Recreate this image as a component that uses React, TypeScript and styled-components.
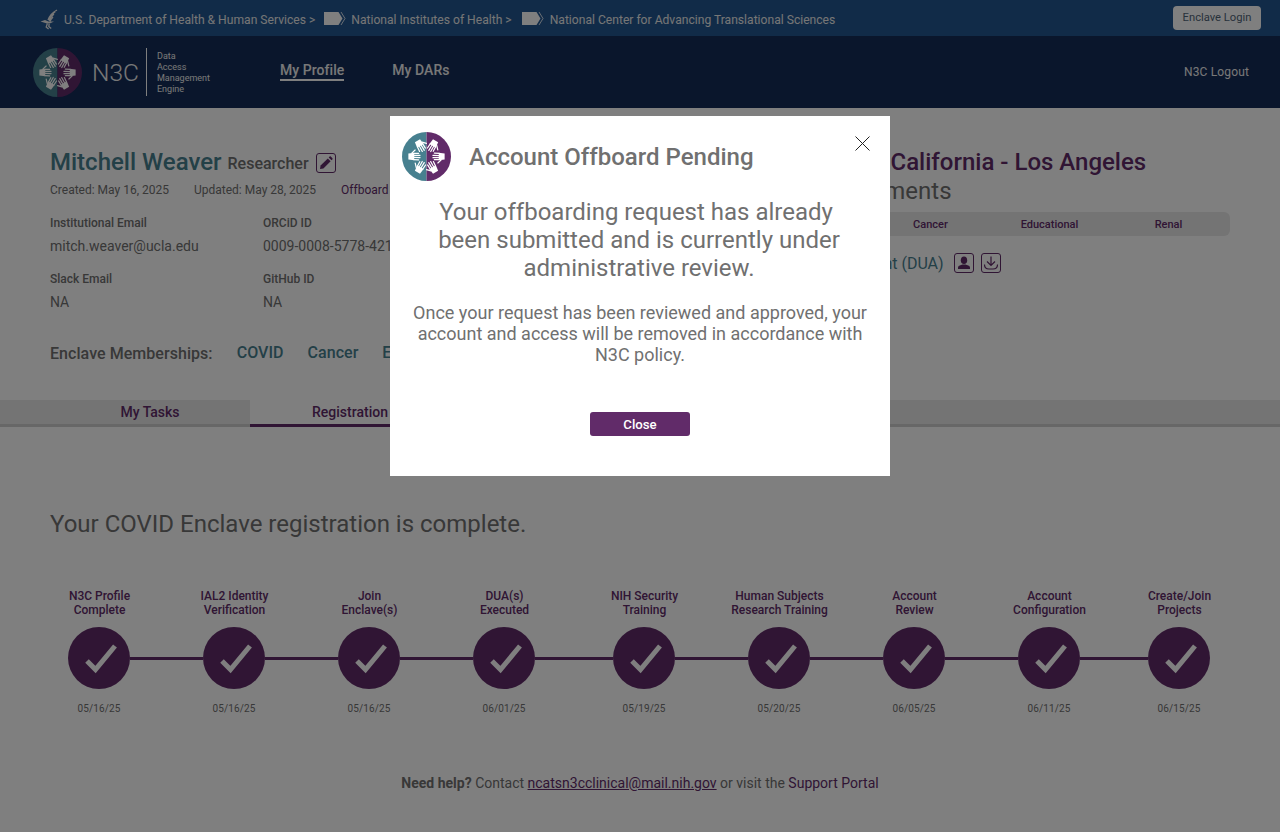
import React from "react";
import styled, { createGlobalStyle } from "styled-components";

const Global = createGlobalStyle`
  html, body { margin: 0; padding: 0; background: #fff; }
  body { font-family: Roboto, "Liberation Sans", sans-serif; color: #707070; overflow: hidden; }
  * { box-sizing: border-box; }
`;

const TEAL = "#47808f";
const PURPLE = "#612b69";

const Page = styled.div`
  position: relative;
  width: 1280px;
  height: 832px;
  overflow: hidden;
`;

const TopBar = styled.div`
  height: 36px;
  background: #225690;
  display: flex;
  align-items: center;
  padding: 4px 19px 0 40px;
  color: #ececec;
  font-size: 12.12px;
`;
const Crumb = styled.span<{ $ml?: number; $mr?: number }>`
  display: inline-flex;
  align-items: center;
  white-space: nowrap;
  margin-left: ${(p) => p.$ml ?? 0}px;
  margin-right: ${(p) => p.$mr ?? 0}px;
`;
const Spacer = styled.div`
  flex: 1;
`;
const EnclaveBtn = styled.button`
  width: 88px;
  height: 24px;
  border: 0;
  border-radius: 4px;
  background: #fff;
  color: #4f6478;
  font: 400 11.2px Roboto, sans-serif;
  padding: 0;
  margin-top: -5px;
`;

const Nav = styled.nav`
  height: 72px;
  background: #142c58;
  display: flex;
  align-items: center;
  padding: 0 31px 0 33px;
  color: #f0f0f0;
`;
const LogoText = styled.div`
  font-size: 24.5px;
  font-weight: 300;
  margin-left: 10px;
  width: 54px;
`;
const LogoRule = styled.div`
  width: 1px;
  height: 48px;
  background: #fff;
`;
const LogoLines = styled.div`
  font-size: 9px;
  line-height: 11px;
  margin: 1px 0 0 10px;
  width: 123px;
`;
const NavLink = styled.a<{ $active?: boolean }>`
  font-size: 14px;
  font-weight: 500;
  letter-spacing: 0.05px;
  margin-right: 48px;
  line-height: 17px;
  margin-top: -2px;
  border-bottom: 2px solid ${(p) => (p.$active ? "#fff" : "transparent")};
`;
const Logout = styled.a`
  font-size: 12px;
  letter-spacing: 0.15px;
`;

const Profile = styled.section`
  display: grid;
  grid-template-columns: 673px 1fr;
  padding: 39px 50px 0;
  height: 292px;
`;
const NameRow = styled.div`
  display: flex;
  align-items: center;
  height: 30px;
`;
const Name = styled.h1`
  margin: 0;
  font-size: 24px;
  font-weight: 500;
  color: ${TEAL};
`;
const Role = styled.span`
  font-size: 16px;
  font-weight: 500;
  margin-left: 6px;
  margin-top: 3px;
`;
const IconBox = styled.span`
  display: inline-flex;
  align-items: center;
  justify-content: center;
  width: 20px;
  height: 20px;
  border: 1px solid ${PURPLE};
  border-radius: 3px;
  color: ${PURPLE};
`;
const EditBox = styled(IconBox)`
  margin-left: 7px;
  margin-top: 1px;
`;
const MetaRow = styled.div`
  display: flex;
  font-size: 12px;
  margin-top: 6px;
  height: 14px;
  line-height: 14px;
  gap: 25px;
`;
const OffboardLink = styled.a`
  color: ${PURPLE};
`;
const Fields = styled.div`
  display: grid;
  grid-template-columns: 213px 213px;
  margin-top: 19px;
  row-gap: 18px;
`;
const Field = styled.div`
  height: 38px;
`;
const FieldLabel = styled.div`
  font-size: 12px;
  font-weight: 500;
  line-height: 14px;
`;
const FieldValue = styled.div`
  font-size: 14px;
  line-height: 16px;
  margin-top: 8px;
`;
const Memberships = styled.div`
  display: flex;
  align-items: baseline;
  margin-top: 34px;
  font-size: 16px;
  font-weight: 500;
  letter-spacing: 0.05px;
  white-space: nowrap;
`;
const MemberLink = styled.a`
  color: ${TEAL};
  margin-left: 24px;
  position: relative;
  top: -1px;
`;

const RightCol = styled.div`
  min-width: 0;
`;
const Institution = styled.h2`
  margin: 0 0 0 27px;
  font-size: 24px;
  font-weight: 500;
  color: ${PURPLE};
  white-space: nowrap;
  height: 30px;
  line-height: 30px;
`;
const Assign = styled.h3`
  margin: 0;
  font-size: 24px;
  font-weight: 400;
  line-height: 28px;
`;
const Pill = styled.div`
  display: grid;
  grid-template-columns: repeat(4, 119px);
  justify-content: end;
  height: 24px;
  margin-top: 7px;
  border-radius: 6px;
  background: #e8e8e8;
  align-items: center;
  padding-right: 2px;
  font-size: 11px;
  font-weight: 500;
  color: ${PURPLE};
  text-align: center;
`;
const DuaRow = styled.div`
  display: flex;
  align-items: center;
  margin-top: 17px;
  padding-left: 28px;
  font-size: 16px;
  color: ${TEAL};
  height: 20px;
  gap: 7px;
`;
const DuaText = styled.span`
  margin-right: 3px;
  white-space: nowrap;
`;

const Tabs = styled.div`
  display: flex;
  height: 27px;
  background: #e9e9e9;
  border-bottom: 3px solid #cfcfcf;
`;
const Tab = styled.div<{ $active?: boolean }>`
  width: 200px;
  height: 27px;
  text-align: center;
  line-height: 25px;
  font-size: 14px;
  font-weight: 500;
  color: ${PURPLE};
  background: ${(p) => (p.$active ? "#fff" : "transparent")};
  border-bottom: 3px solid ${(p) => (p.$active ? PURPLE : "transparent")};
`;
const TabsInset = styled.div`
  width: 50px;
`;

const Status = styled.h2`
  margin: 83px 0 0 50px;
  font-size: 24px;
  line-height: 28px;
  font-weight: 400;
`;

const Steps = styled.div`
  display: flex;
  margin: 51px 0 0 34px;
`;
const Step = styled.div<{ $ml: number; $line: number }>`
  position: relative;
  width: 130px;
  flex: none;
  margin-left: ${(p) => p.$ml}px;
  display: flex;
  flex-direction: column;
  align-items: center;
  &::after {
    content: "";
    display: ${(p) => (p.$line ? "block" : "none")};
    position: absolute;
    top: 68px;
    left: 96px;
    width: ${(p) => p.$line}px;
    height: 3px;
    background: ${PURPLE};
  }
`;
const StepLabel = styled.div`
  height: 28px;
  font-size: 12px;
  line-height: 14px;
  font-weight: 500;
  color: ${PURPLE};
  text-align: center;
  white-space: pre-line;
  padding-left: 1px;
`;
const Circle = styled.div`
  width: 62px;
  height: 62px;
  margin-top: 10px;
  border-radius: 50%;
  background: ${PURPLE};
  display: flex;
  align-items: center;
  justify-content: center;
`;
const StepDate = styled.div`
  font-size: 10px;
  line-height: 12px;
  margin-top: 14px;
  letter-spacing: 0.1px;
`;

const Help = styled.footer`
  margin-top: 60px;
  text-align: center;
  font-size: 14px;
  line-height: 16px;
`;
const HelpStrong = styled.b`
  font-weight: 700;
`;
const HelpLink = styled.a`
  color: ${PURPLE};
  text-decoration: ${(p: { $u?: boolean }) => (p.$u ? "underline" : "none")};
`;

const Overlay = styled.div`
  position: absolute;
  inset: 0;
  background: rgba(0, 0, 0, 0.5);
`;
const Modal = styled.div`
  position: absolute;
  top: 116px;
  left: 390px;
  width: 500px;
  height: 360px;
  background: #fff;
  padding: 16px 12px 0;
  color: #707070;
  display: flex;
  flex-direction: column;
  align-items: center;
`;
const ModalHead = styled.div`
  display: flex;
  align-items: center;
  align-self: stretch;
  gap: 18px;
  height: 49px;
`;
const ModalTitle = styled.h2`
  margin: 0;
  font-size: 24px;
  font-weight: 500;
`;
const CloseX = styled.button`
  position: absolute;
  top: 19px;
  right: 19px;
  width: 17px;
  height: 17px;
  padding: 0;
  border: 0;
  background: none;
  display: flex;
`;
const Lead = styled.p`
  margin: 17px 2px 0 0;
  width: 420px;
  font-size: 24px;
  line-height: 28px;
  text-align: center;
`;
const Sub = styled.p`
  margin: 20px 0 0;
  font-size: 18px;
  line-height: 21px;
  text-align: center;
`;
const CloseBtn = styled.button`
  margin-top: 47px;
  width: 100px;
  height: 24px;
  border: 0;
  border-radius: 3px;
  background: ${PURPLE};
  color: #fff;
  font: 500 13.2px Roboto, sans-serif;
  padding: 0;
`;

const Hand = () => (
  <g>
    <path d="M-3 -18.5 L3 -18.5 L3.8 -12.5 L-3.8 -12.5 Z" fill="#fff" />
    <g stroke="#fff" strokeWidth="1.25" strokeLinecap="round" fill="none">
      <path d="M-3.1 -13 L-3.5 -8" />
      <path d="M-1 -13 L-1.1 -6.6" />
      <path d="M1.1 -13 L1.2 -6.6" />
      <path d="M3.1 -13 L3.3 -8" />
      <path d="M3.4 -15 L6.6 -11.6" />
    </g>
  </g>
);

const Logo = ({ size }: { size: number }) => (
  <svg width={size} height={size} viewBox="-25 -25 50 50" style={{ flex: "none" }}>
    <path d="M0 -25 A25 25 0 0 0 0 25 Z" fill={TEAL} />
    <path d="M0 -25 A25 25 0 0 1 0 25 Z" fill={PURPLE} />
    {[-30, 30, 90, 150, 210, 270].map((a) => (
      <g key={a} transform={`rotate(${a})`}>
        <Hand />
      </g>
    ))}
  </svg>
);

const Eagle = () => (
  <svg width="18" height="21" viewBox="0 0 18 21" fill="none" stroke="#ececec" strokeWidth="1.3" style={{ marginRight: 6, marginTop: -2 }}>
    <path d="M17 1 C13 3 9.5 7 8 11 M15.4 2.4 C12 5 9.5 8 8.8 11.5 M14 5 C11.5 7 10 9.5 9.6 12 M13 8 C11 10 10.4 11 10.2 12.6" />
    <path d="M0.5 12.6 L5 11 L8.5 12.5 L14 12.6 L10.4 14.2 L7 14.6 Z" fill="#ececec" stroke="none" />
    <path d="M7.4 14.5 L6.2 18 L8.6 20 M9.2 14.6 L8.8 17.4 L11.2 19.6" />
  </svg>
);

const Tag = () => (
  <svg width="22" height="13" viewBox="0 0 22 13" style={{ margin: "-3px 5px 0 9px", flex: "none" }}>
    <path d="M0 0 H14.5 L18.5 6.5 L14.5 13 H0 Z" fill="#fff" />
    <path d="M17 0 L21 6.5 L17 13" fill="none" stroke="#fff" strokeWidth="0.8" />
  </svg>
);

const Check = () => (
  <svg width="36" height="34" viewBox="0 0 36 34" fill="none">
    <path d="M6 20 L14.5 28.5 L34 5" stroke="#fff" strokeWidth="5" />
  </svg>
);

const Pencil = () => (
  <svg width="14" height="14" viewBox="0 0 14 14" fill="currentColor">
    <path d="M1 13 L1.6 9.6 L8.8 2.4 L11.6 5.2 L4.4 12.4 Z" />
    <path d="M9.7 1.5 L10.6 .6 Q11.2 .1 11.8 .6 L13.4 2.2 Q13.9 2.8 13.4 3.4 L12.5 4.3 Z" />
  </svg>
);

const Person = () => (
  <svg width="14" height="14" viewBox="0 0 14 14" fill="currentColor">
    <ellipse cx="7" cy="4.2" rx="3.2" ry="3.8" />
    <path d="M1 13 V11.4 Q1 9.8 3.4 9.2 L5.4 8.6 H8.6 L10.6 9.2 Q13 9.8 13 11.4 V13 Z" />
  </svg>
);

const Download = () => (
  <svg width="16" height="16" viewBox="0 0 16 16" fill="none" stroke="currentColor" strokeWidth="1.2">
    <path d="M8 1.5 V10 M4 6.5 L8 10.5 L12 6.5" />
    <path d="M1.5 9.5 Q1.5 14 6 14 H10 Q14.5 14 14.5 9.5" />
  </svg>
);

const steps = [
  { label: "N3C Profile\nComplete", date: "05/16/25", ml: 0, line: 73 },
  { label: "IAL2 Identity\nVerification", date: "05/16/25", ml: 5, line: 73 },
  { label: "Join\nEnclave(s)", date: "05/16/25", ml: 5, line: 73 },
  { label: "DUA(s)\nExecuted", date: "06/01/25", ml: 5, line: 78 },
  { label: "NIH Security\nTraining", date: "05/19/25", ml: 10, line: 73 },
  { label: "Human Subjects\nResearch Training", date: "05/20/25", ml: 5, line: 73 },
  { label: "Account\nReview", date: "06/05/25", ml: 5, line: 73 },
  { label: "Account\nConfiguration", date: "06/11/25", ml: 5, line: 68 },
  { label: "Create/Join\nProjects", date: "06/15/25", ml: 0, line: 0 },
];

export default function App() {
  return (
    <Page>
      <Global />
      <TopBar>
        <Eagle />
        <Crumb>U.S. Department of Health &amp; Human Services &gt;</Crumb>
        <Tag />
        <Crumb $mr={1}>National Institutes of Health &gt;</Crumb>
        <Tag />
        <Crumb $ml={1}>National Center for Advancing Translational Sciences</Crumb>
        <Spacer />
        <EnclaveBtn>Enclave Login</EnclaveBtn>
      </TopBar>
      <Nav>
        <Logo size={49} />
        <LogoText>N3C</LogoText>
        <LogoRule />
        <LogoLines>
          Data
          <br />
          Access
          <br />
          Management
          <br />
          Engine
        </LogoLines>
        <NavLink $active>My Profile</NavLink>
        <NavLink>My DARs</NavLink>
        <Spacer />
        <Logout>N3C Logout</Logout>
      </Nav>

      <Profile>
        <div>
          <NameRow>
            <Name>Mitchell Weaver</Name>
            <Role>Researcher</Role>
            <EditBox>
              <Pencil />
            </EditBox>
          </NameRow>
          <MetaRow>
            <span>Created: May 16, 2025</span>
            <span>Updated: May 28, 2025</span>
            <OffboardLink>Offboard</OffboardLink>
          </MetaRow>
          <Fields>
            <Field>
              <FieldLabel>Institutional Email</FieldLabel>
              <FieldValue>mitch.weaver@ucla.edu</FieldValue>
            </Field>
            <Field>
              <FieldLabel>ORCiD ID</FieldLabel>
              <FieldValue>0009-0008-5778-4211</FieldValue>
            </Field>
            <Field>
              <FieldLabel>Slack Email</FieldLabel>
              <FieldValue>NA</FieldValue>
            </Field>
            <Field>
              <FieldLabel>GitHub ID</FieldLabel>
              <FieldValue>NA</FieldValue>
            </Field>
          </Fields>
          <Memberships>
            Enclave Memberships:
            <MemberLink>COVID</MemberLink>
            <MemberLink>Cancer</MemberLink>
            <MemberLink>Educational</MemberLink>
            <MemberLink>Renal</MemberLink>
          </Memberships>
        </div>
        <RightCol>
          <Institution>University of California - Los Angeles</Institution>
          <Assign>Enclave Assignments</Assign>
          <Pill>
            <span>COVID</span>
            <span>Cancer</span>
            <span>Educational</span>
            <span>Renal</span>
          </Pill>
          <DuaRow>
            <DuaText>Data Use Agreement (DUA)</DuaText>
            <IconBox>
              <Person />
            </IconBox>
            <IconBox>
              <Download />
            </IconBox>
          </DuaRow>
        </RightCol>
      </Profile>

      <Tabs>
        <TabsInset />
        <Tab>My Tasks</Tab>
        <Tab $active>Registration</Tab>
      </Tabs>

      <Status>Your COVID Enclave registration is complete.</Status>

      <Steps>
        {steps.map((s) => (
          <Step key={s.label} $ml={s.ml} $line={s.line}>
            <StepLabel>{s.label}</StepLabel>
            <Circle>
              <Check />
            </Circle>
            <StepDate>{s.date}</StepDate>
          </Step>
        ))}
      </Steps>

      <Help>
        <HelpStrong>Need help?</HelpStrong> Contact{" "}
        <HelpLink $u>ncatsn3cclinical@mail.nih.gov</HelpLink> or visit the{" "}
        <HelpLink>Support Portal</HelpLink>
      </Help>

      <Overlay />
      <Modal>
        <ModalHead>
          <Logo size={49} />
          <ModalTitle>Account Offboard Pending</ModalTitle>
        </ModalHead>
        <CloseX aria-label="Close">
          <svg width="17" height="17" viewBox="0 0 17 17" stroke="#222" strokeWidth="1">
            <path d="M1.5 1.5 L15.5 15.5 M15.5 1.5 L1.5 15.5" />
          </svg>
        </CloseX>
        <Lead>
          Your offboarding request has already{"\u00a0"}
          <br />
          been submitted and is currently under
          <br />
          administrative review.
        </Lead>
        <Sub>
          Once your request has been reviewed and approved, your
          <br />
          account and access will be removed in accordance with
          <br />
          N3C policy.
        </Sub>
        <CloseBtn>Close</CloseBtn>
      </Modal>
    </Page>
  );
}
